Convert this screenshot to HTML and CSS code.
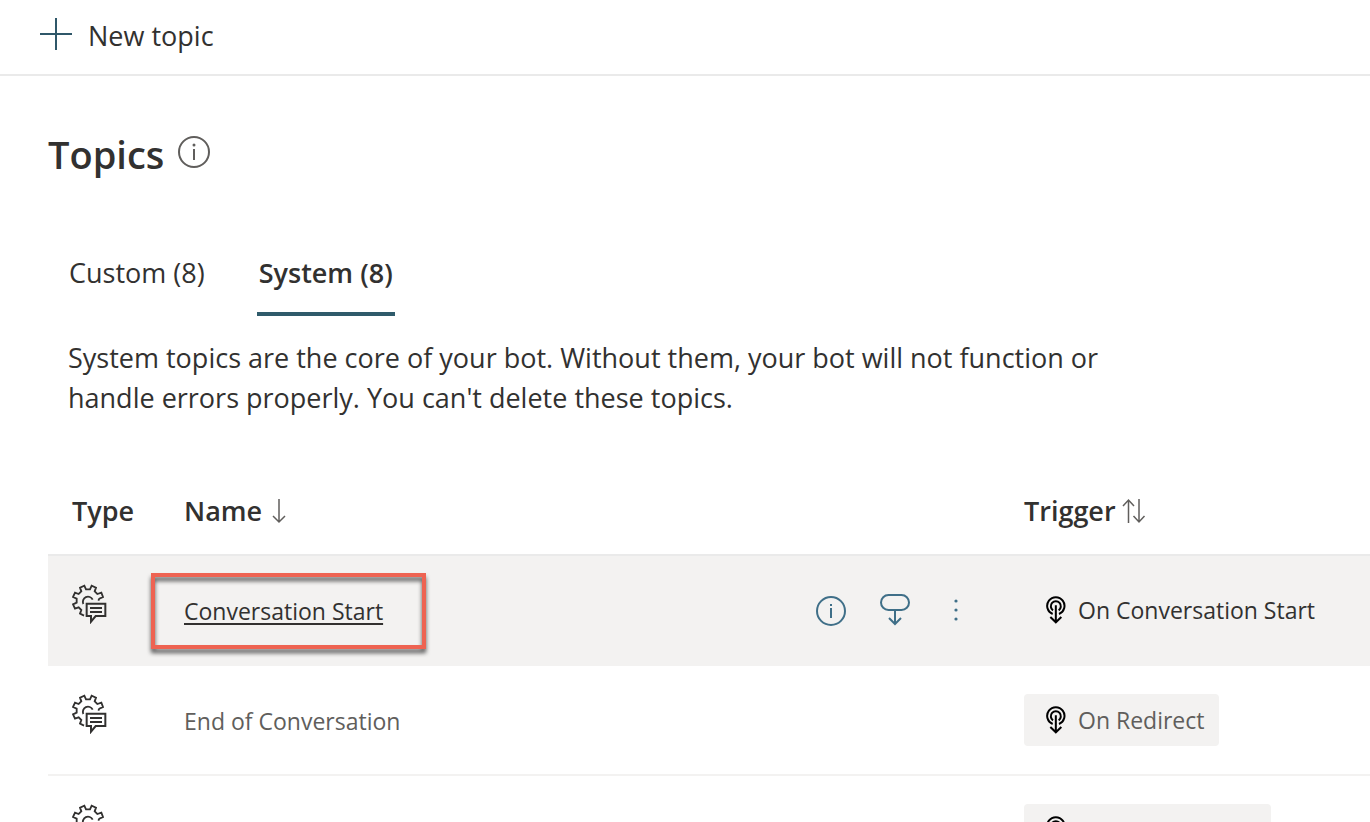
FILE: index.html
```html
<!DOCTYPE html>
<html lang="en">
<head>
<meta charset="utf-8">
<title>Topics</title>
<link rel="stylesheet" href="styles.css">
</head>
<body>
<svg class="sprite" aria-hidden="true">
  <symbol id="topic-type" viewBox="36 42 105 120">
    <g fill="none" stroke="currentColor" stroke-width="5.5">
      <path d="M115 92 118 86 129 81 124 68 112 72 104 64 108 53 95 47 90 58H78L73 47 60 53 64 64 56 72 45 68 39 81 50 86V98L39 103 45 116 56 112 64 120 60 131 72 137"/>
      <path d="M70 102A15 15 0 1 1 98 89"/>
      <path d="M80 101H136V138H107L93 155V138H80Z" stroke-width="6"/>
      <path d="M90 114H126M90 126H126"/>
    </g>
  </symbol>
  <symbol id="trigger" viewBox="48 18 60 84">
    <g fill="none" stroke="currentColor" stroke-width="6">
      <path d="M68 72A26 26 0 1 1 87 72"/>
      <path d="M69 61A15 15 0 1 1 86 61"/>
      <path d="M77.500 46V97M61 81 77.500 97 94 81"/>
    </g>
  </symbol>
</svg>
<header class="toolbar">
  <button class="new-topic" type="button">
    <svg class="icon-32" viewBox="0 0 32 32" aria-hidden="true"><path d="M16 0V32M0 16H32" stroke="currentColor" stroke-width="2"/></svg>
    <span>New topic</span>
  </button>
</header>
<main class="page">
  <div class="heading">
    <h1>Topics</h1>
    <button class="icon-button muted" type="button" aria-label="About topics">
      <svg class="icon-32" viewBox="0 0 32 32"><circle cx="16" cy="16" r="15" fill="none" stroke="currentColor" stroke-width="2"/><path d="M16 13V24" stroke="currentColor" stroke-width="2"/><circle cx="16" cy="9" r="1.500" fill="currentColor"/></svg>
    </button>
  </div>
  <div class="tabs" role="tablist">
    <button class="tab" type="button" role="tab" aria-selected="false">Custom (8)</button>
    <button class="tab selected" type="button" role="tab" aria-selected="true">System (8)</button>
  </div>
  <p class="intro">System topics are the core of your bot. Without them, your bot will not function or handle errors properly. You can't delete these topics.</p>
  <table class="topics">
    <colgroup><col class="col-type"><col><col class="col-trigger"></colgroup>
    <thead>
      <tr>
        <th scope="col">Type</th>
        <th scope="col"><button class="sort" type="button">Name <svg class="sort-icon" viewBox="0 0 14 26" aria-hidden="true"><path d="M7 1V24M1 18 7 24 13 18"/></svg></button></th>
        <th scope="col"><button class="sort tight" type="button">Trigger <svg class="sort-icon wide" viewBox="0 0 24 26" aria-hidden="true"><path d="M6.500 25V2M1 8 6.500 2 12 8M17 1V24M11.500 18 17 24 22.500 18"/></svg></button></th>
      </tr>
    </thead>
    <tbody>
      <tr class="active">
        <td><svg class="type-icon" role="img" aria-label="System topic"><use href="#topic-type"/></svg></td>
        <td>
          <div class="name">
            <span class="callout"><a href="#start">Conversation Start</a></span>
            <div class="actions">
              <button class="icon-button" type="button" aria-label="Details"><svg class="icon-30" viewBox="0 0 30 30"><circle cx="15" cy="15" r="14" fill="none" stroke="currentColor" stroke-width="2"/><path d="M15 12V22" stroke="currentColor" stroke-width="2"/><path d="M15 8V10" stroke="currentColor" stroke-width="2"/></svg></button>
              <button class="icon-button" type="button" aria-label="Redirect"><svg class="icon-30" viewBox="0 0 30 30" fill="none" stroke="currentColor" stroke-width="2"><rect x="1" y="-1" width="28" height="15" rx="7.500"/><path d="M15 14V28M9 22 15 28 21 22"/></svg></button>
              <button class="icon-button" type="button" aria-label="More"><svg class="icon-30" viewBox="0 0 30 30" fill="currentColor"><circle cx="12" cy="5" r="1.600"/><circle cx="12" cy="14" r="1.600"/><circle cx="12" cy="23" r="1.600"/></svg></button>
            </div>
          </div>
        </td>
        <td><span class="chip"><svg class="trigger-icon" aria-hidden="true"><use href="#trigger"/></svg>On Conversation Start</span></td>
      </tr>
      <tr>
        <td><svg class="type-icon" role="img" aria-label="System topic"><use href="#topic-type"/></svg></td>
        <td><div class="name"><a href="#end">End of Conversation</a></div></td>
        <td><span class="chip"><svg class="trigger-icon" aria-hidden="true"><use href="#trigger"/></svg>On Redirect</span></td>
      </tr>
      <tr>
        <td><svg class="type-icon" role="img" aria-label="System topic"><use href="#topic-type"/></svg></td>
        <td></td>
        <td><span class="chip long"><svg class="trigger-icon" aria-hidden="true"><use href="#trigger"/></svg></span></td>
      </tr>
    </tbody>
  </table>
</main>
</body>
</html>
```
FILE: styles.css
```css
* { box-sizing: border-box; }

body {
  margin: 0;
  height: 100vh;
  overflow: hidden;
  background: #fff;
  color: #323130;
  font: 27px/40px "Segoe UI", "Open Sans", "Noto Sans", sans-serif;
}

svg { display: block; flex: none; }

button {
  padding: 0;
  border: 0;
  background: none;
  color: inherit;
  font: inherit;
  cursor: pointer;
}

.sprite { position: absolute; width: 0; height: 0; }

.icon-32 { width: 32px; height: 32px; }
.icon-30 { width: 30px; height: 30px; overflow: visible; }

.toolbar {
  padding: 14px 40px 20px;
  border-bottom: 2px solid #eaeaea;
}

.new-topic { display: flex; align-items: center; gap: 16px; }
.new-topic svg { color: #2f5769; }
.new-topic span { padding-top: 2px; margin-bottom: -2px; }

.page { padding: 48px 0 0 48px; }

.heading { display: flex; align-items: center; gap: 14px; }

h1 { margin: 0; font-size: 38px; line-height: 60px; font-weight: 600; }

.icon-button { color: #3f6f88; }
.muted { color: #605e5c; margin-bottom: 4px; }

.tabs { display: flex; gap: 48px; padding: 56px 0 0 21px; }

.tab { height: 76px; padding: 0 4px 6px 0; border-bottom: 4px solid transparent; }
.tab.selected { padding: 0 2px 6px; border-color: #2f5b6b; font-weight: 600; }

.intro { max-width: 1080px; margin: 22px 20px 0; }

.topics {
  width: 100%;
  margin-top: 50px;
  table-layout: fixed;
  border-collapse: separate;
  border-spacing: 0;
  font-size: 23px;
}

.col-type { width: 112px; }
.col-trigger { width: 370px; }

th {
  height: 88px;
  padding: 0 24px;
  border-bottom: 2px solid #eaeaea;
  font-size: 27px;
  font-weight: 600;
  text-align: left;
}

td {
  height: 110px;
  padding: 0 0 0 24px;
  border-bottom: 2px solid #f3f2f1;
  color: #605e5c;
}

td:nth-child(2) { padding-top: 2px; }

th:last-child { padding-right: 0; }

.active td { background: #f3f2f1; color: #323130; }

.sort { display: flex; align-items: center; gap: 10px; }
.sort.tight { gap: 6px; }

.sort-icon {
  width: 14px;
  height: 26px;
  fill: none;
  stroke: #605e5c;
  stroke-width: 1.500;
}
.sort-icon.wide { width: 24px; }

.type-icon { width: 35px; height: 40px; margin-bottom: 12px; color: #323130; }

.name { display: flex; align-items: center; justify-content: space-between; }
.name a { color: inherit; text-decoration: none; }

.active .name a {
  text-decoration: underline;
  text-decoration-thickness: 2px;
  text-underline-offset: 3px;
}

.callout { position: relative; }
.callout::after {
  content: "";
  position: absolute;
  inset: -18px -43px -18px -33px;
  border: 4px solid #ee6352;
  filter: drop-shadow(0 4px 2px #555);
  pointer-events: none;
}

.actions { display: flex; gap: 34px; margin-right: 26px; }

.chip {
  display: inline-flex;
  align-items: center;
  gap: 12px;
  height: 52px;
  padding: 0 14px 0 22px;
  border-radius: 4px;
  background: #f3f2f1;
  vertical-align: middle;
  white-space: nowrap;
}
.chip.long { width: 247px; }

.trigger-icon { width: 20px; height: 28px; color: #000; }
```
